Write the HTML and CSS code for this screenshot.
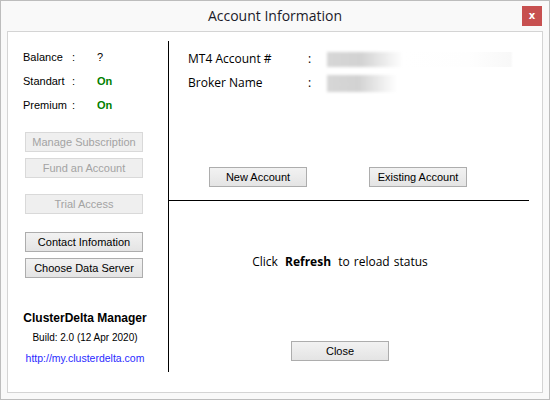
FILE: index.html
```html
<!DOCTYPE html>
<html>
<head>
<meta charset="utf-8">
<link rel="stylesheet" href="styles.css">
</head>
<body>
<div class="window">
  <div class="titlebar">
    <span></span>
    <span class="title">Account Information</span>
    <span class="close">x</span>
  </div>
  <div class="panel">
    <div class="left">
      <div class="stats">
        <span>Balance</span><span>:</span><span>?</span>
        <span>Standart</span><span>:</span><span class="on">On</span>
        <span>Premium</span><span>:</span><span class="on">On</span>
      </div>
      <div class="btns">
        <button class="btn wide" disabled>Manage Subscription</button>
        <button class="btn wide gap-s" disabled>Fund an Account</button>
        <button class="btn wide gap-m" disabled>Trial Access</button>
        <button class="btn wide gap-l">Contact Infomation</button>
        <button class="btn wide gap-s">Choose Data Server</button>
      </div>
      <div class="about">
        <div class="app">ClusterDelta Manager</div>
        <div class="build">Build: 2.0 (12 Apr 2020)</div>
        <div class="url">http://my.clusterdelta.com</div>
      </div>
    </div>
    <div class="vline"></div>
    <div class="right">
      <div class="top">
        <div class="field">
          <span class="flabel">MT4 Account #</span><span class="fcolon">:</span><span class="blur b1"></span><span class="blur-faint"></span>
        </div>
        <div class="field">
          <span class="flabel">Broker Name</span><span class="fcolon">:</span><span class="blur b2"></span>
        </div>
        <div class="actions">
          <button class="btn">New Account</button>
          <button class="btn existing">Existing Account</button>
        </div>
      </div>
      <div class="bottom">
        <div class="status">Click <b>Refresh</b> to reload status</div>
        <button class="btn close-btn">Close</button>
      </div>
    </div>
  </div>
</div>
</body>
</html>
```

FILE: styles.css
```css
html, body {
  margin: 0;
  padding: 0;
  background: #f9f9f9;
}

.window {
  width: 550px;
  height: 400px;
  box-sizing: border-box;
  border: 1px solid #bdbdbd;
  background: #f9f9f9;
  padding: 0 6px 6px 6px;
  display: flex;
  flex-direction: column;
  font-family: "Liberation Sans", Arial, sans-serif;
  color: #000;
}

.titlebar {
  height: 30px;
  display: grid;
  grid-template-columns: 1fr auto 1fr;
  align-items: start;
}

.title {
  font-family: "Open Sans", "Noto Sans", sans-serif;
  font-size: 14px;
  line-height: 30px;
  color: #1b1b2a;
}

.close {
  justify-self: end;
  margin-top: 5px;
  margin-right: 1px;
  width: 20px;
  height: 20px;
  background: #c75050;
  color: #fff;
  font-family: "DejaVu Sans", sans-serif;
  font-weight: bold;
  font-size: 10px;
  line-height: 19px;
  text-align: center;
}

.panel {
  flex: 1;
  background: #fff;
  border: 1px solid #d4d4d4;
  display: flex;
  padding: 9px 13px 20px 0;
  min-height: 0;
}

.left {
  width: 160px;
  display: flex;
  flex-direction: column;
}

.stats {
  margin-top: 4px;
  padding-left: 15px;
  display: grid;
  grid-template-columns: 49px 25px auto;
  grid-auto-rows: 24px;
  align-items: center;
  font-size: 11px;
}

.on {
  color: #008000;
  font-weight: bold;
}

.btns {
  margin-top: 15px;
  padding-left: 17px;
  display: flex;
  flex-direction: column;
  align-items: flex-start;
}

.btn {
  box-sizing: border-box;
  width: 98px;
  height: 20px;
  padding: 0;
  margin: 0;
  border: 1px solid #adadad;
  border-radius: 0;
  background: linear-gradient(#f2f2f2, #e4e4e4);
  font-family: "Liberation Sans", Arial, sans-serif;
  font-size: 11px;
  color: #000;
  line-height: 18px;
}

.btn.wide {
  width: 118px;
}

.btn:disabled {
  background: #efefef;
  border-color: #d9d9d9;
  color: #a3a3a3;
}

.gap-s { margin-top: 6px; }
.gap-m { margin-top: 16px; }
.gap-l { margin-top: 18px; }

.about {
  margin-top: 30px;
  width: 154px;
  text-align: center;
}

.app {
  font-weight: bold;
  font-size: 12px;
  line-height: 20px;
}

.build {
  font-size: 10px;
  line-height: 20px;
}

.url {
  font-size: 10.5px;
  line-height: 20px;
  color: #2a2aff;
}

.vline {
  width: 1px;
  background: #000;
}

.right {
  flex: 1;
  display: flex;
  flex-direction: column;
}

.top {
  height: 160px;
  box-sizing: border-box;
  padding: 6px 0 0 20px;
  border-bottom: 1px solid #000;
  margin-left: -1px;
  font-family: "Open Sans", "Noto Sans", sans-serif;
  font-size: 12px;
}

.field {
  height: 24px;
  line-height: 24px;
  display: flex;
  align-items: flex-start;
}

.flabel {
  width: 120px;
}

.fcolon {
  width: 19px;
}

.blur {
  display: block;
  background: linear-gradient(to right, #d6d6d6 0%, #d2d2d2 45%, #ffffff 100%);
  filter: blur(1.5px);
}

.b1 {
  width: 76px;
  height: 15px;
  margin-top: 5px;
}

.b2 {
  width: 70px;
  height: 17px;
  margin-top: 4px;
}

.blur-faint {
  display: block;
  width: 110px;
  height: 15px;
  margin-top: 5px;
  background: linear-gradient(to right, #ffffff, #fefefe 60%, #f8f8f8 98%, #ffffff);
}

.actions {
  margin-top: 72px;
  padding-left: 21px;
  display: flex;
}

.existing {
  margin-left: 62px;
}

.bottom {
  flex: 1;
  display: flex;
  flex-direction: column;
  align-items: center;
  padding-right: 18px;
}

.status {
  margin-top: 52px;
  font-family: "Open Sans", "Noto Sans", sans-serif;
  font-size: 12px;
  line-height: 18px;
  word-spacing: 1px;
}

.status b {
  margin: 0 3px;
}

.close-btn {
  margin-top: 70px;
}
```
